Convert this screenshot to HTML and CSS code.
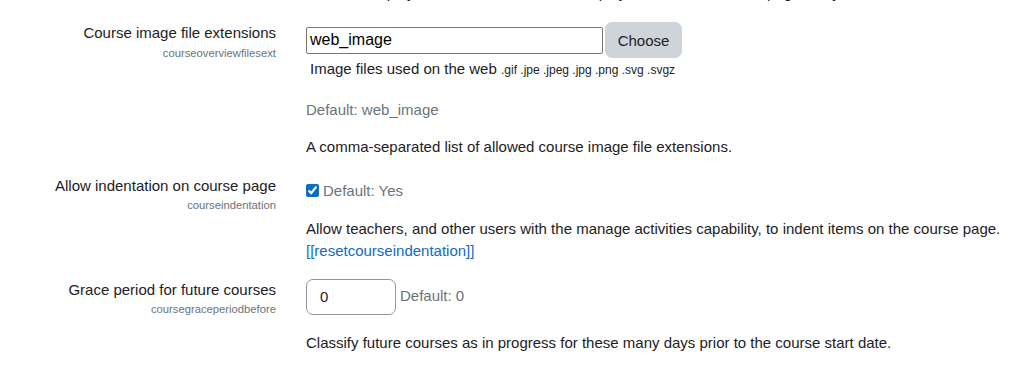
FILE: index.html
```html
<!DOCTYPE html>
<html lang="en">
<head>
  <meta charset="UTF-8">
  <title>Course default settings</title>
  <link rel="stylesheet" href="styles.css">
</head>
<body>
  <div class="settings">

    <div class="setting-tail">
      <p class="description">Files are displayed in the course and the display on the course home page. Only</p>
    </div>

    <div class="setting">
      <div class="setting-label">
        <label for="id_s_courseoverviewfilesext">Course image file extensions</label>
        <span class="shortname">courseoverviewfilesext</span>
      </div>
      <div class="setting-field">
        <div class="filetypes-row">
          <input type="text" class="text-input wide" id="id_s_courseoverviewfilesext" value="web_image">
          <button class="btn-secondary">Choose</button>
        </div>
        <div class="filetypes-desc">Image files used on the web <small>.gif .jpe .jpeg .jpg .png .svg .svgz</small></div>
        <div class="defaultinfo gap">Default: web_image</div>
        <p class="description">A comma-separated list of allowed course image file extensions.</p>
      </div>
    </div>

    <div class="setting">
      <div class="setting-label">
        <label for="id_s_courseindentation">Allow indentation on course page</label>
        <span class="shortname">courseindentation</span>
      </div>
      <div class="setting-field">
        <div class="checkbox-row">
          <input type="checkbox" id="id_s_courseindentation" checked>
          <span class="defaultinfo">Default: Yes</span>
        </div>
        <p class="description">Allow teachers, and other users with the manage activities capability, to indent items on the course page.<br><a href="#">[[resetcourseindentation]]</a></p>
      </div>
    </div>

    <div class="setting">
      <div class="setting-label">
        <label for="id_s_coursegraceperiodbefore">Grace period for future courses</label>
        <span class="shortname">coursegraceperiodbefore</span>
      </div>
      <div class="setting-field">
        <div class="number-row">
          <input type="text" class="text-input small" id="id_s_coursegraceperiodbefore" value="0">
          <span class="defaultinfo">Default: 0</span>
        </div>
        <p class="description">Classify future courses as in progress for these many days prior to the course start date.</p>
      </div>
    </div>

  </div>
</body>
</html>
```

FILE: styles.css
```css
html, body {
  margin: 0;
  padding: 0;
  background: #ffffff;
  color: #1d2125;
  font-family: 'Liberation Sans', Arial, sans-serif;
  font-size: 15px;
  line-height: 22.5px;
  overflow: hidden;
}

.settings {
  display: flex;
  flex-direction: column;
}

.setting-tail {
  margin-top: -18px;
  margin-bottom: 17.5px;
  padding-left: 306px;
}

.setting {
  display: grid;
  grid-template-columns: 276px 1fr;
  column-gap: 30px;
  margin-bottom: 16px;
}

.setting-label {
  display: flex;
  flex-direction: column;
  align-items: flex-end;
  text-align: right;
}

.setting-label label {
  color: #1d2125;
}

.shortname {
  font-size: 11.25px;
  line-height: 16.5px;
  color: #6a737b;
}

.setting-field {
  display: flex;
  flex-direction: column;
  align-items: flex-start;
}

.description {
  margin: 0;
  white-space: nowrap;
}

.description a {
  color: #0f6cbf;
  text-decoration: none;
}

.defaultinfo {
  color: #6a737b;
}

.defaultinfo.gap {
  margin-top: 17px;
  margin-bottom: 15px;
}

/* file types */
.filetypes-row {
  display: flex;
  align-items: center;
  gap: 2px;
  height: 36px;
}

.text-input {
  box-sizing: border-box;
  font-family: 'Liberation Sans', Arial, sans-serif;
  color: #1d2125;
  background: #ffffff;
  border: 1px solid #8f959e;
  outline: none;
  margin: 0;
}

.text-input.wide {
  width: 297px;
  height: 27px;
  padding: 0 3px;
  border-radius: 2px;
  border-color: #767676;
  font-size: 16px;
  color: #000000;
}

.text-input.small {
  width: 90px;
  height: 36px;
  padding: 0 13px;
  border-radius: 7px;
  font-size: 15px;
}

.btn-secondary {
  font-family: 'Liberation Sans', Arial, sans-serif;
  font-size: 15px;
  color: #1d2125;
  background: #ced4da;
  border: 1px solid #ced4da;
  border-radius: 7px;
  width: 77px;
  height: 36px;
  padding: 0;
  cursor: pointer;
}

.filetypes-desc {
  padding-left: 4px;
}

.filetypes-desc small {
  font-size: 12px;
}

/* checkbox */
.checkbox-row {
  display: flex;
  align-items: center;
  gap: 4px;
  padding-top: 5px;
  margin-bottom: 15.5px;
}

.checkbox-row input {
  width: 13px;
  height: 13px;
  margin: 0;
  accent-color: #0f6cbf;
}

/* number */
.number-row {
  display: flex;
  align-items: center;
  gap: 4px;
  margin-bottom: 17px;
}
```
